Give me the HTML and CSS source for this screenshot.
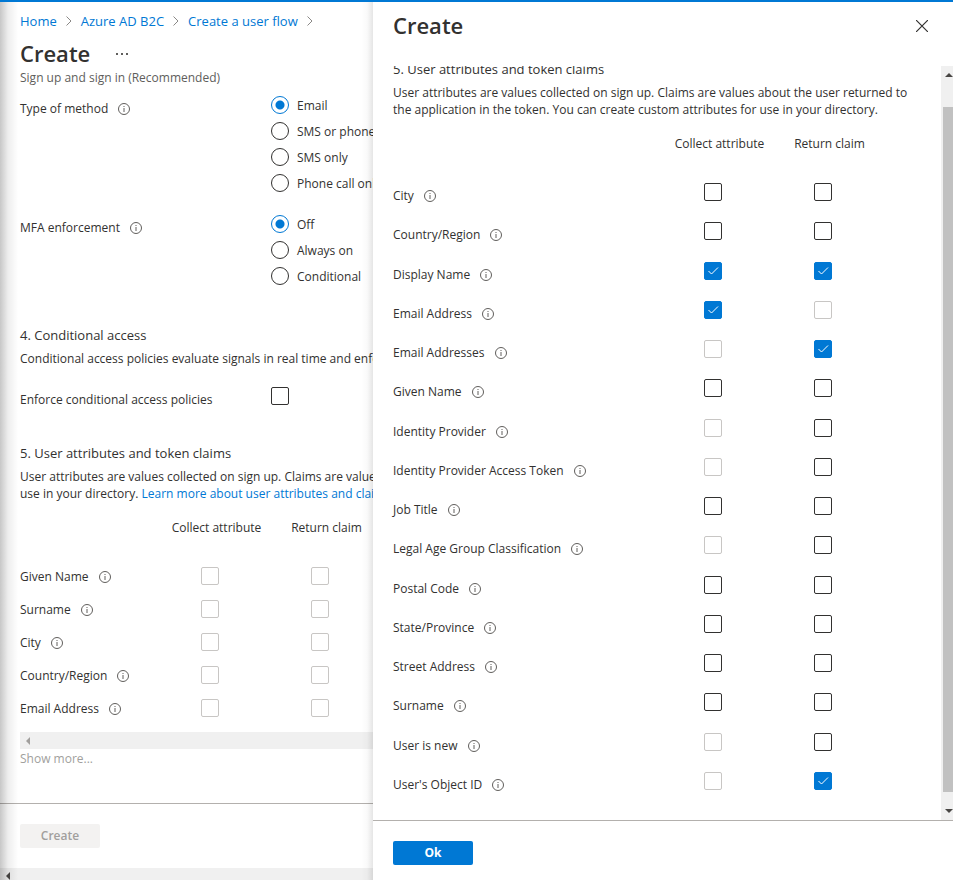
FILE: index.html
```html
<!DOCTYPE html>
<html lang="en">
<head>
<meta charset="utf-8">
<meta name="viewport" content="width=device-width, initial-scale=1">
<title>Create - Azure AD B2C</title>
<link rel="stylesheet" href="styles.css">
</head>
<body>
<svg class="sprite" aria-hidden="true">
  <symbol id="info" viewBox="0 0 12 12">
    <circle cx="6" cy="6" r="5.5" fill="none" stroke="#605e5c"/>
    <path d="M6 5v4M6 3v1" stroke="#605e5c" fill="none"/>
  </symbol>
  <symbol id="chevron" viewBox="0 0 6 10">
    <path d="M.5.5 5 5 .5 9.5" fill="none" stroke="#8a8886"/>
  </symbol>
</svg>
<div class="app">
  <main class="blade">
    <header class="blade-head">
      <nav class="crumbs" aria-label="Breadcrumb">
        <a href="#">Home</a><svg class="chev"><use href="#chevron"/></svg>
        <a href="#">Azure AD B2C</a><svg class="chev"><use href="#chevron"/></svg>
        <a href="#">Create a user flow</a><svg class="chev"><use href="#chevron"/></svg>
      </nav>
      <div class="title-row">
        <h1>Create</h1>
        <button class="more" type="button" aria-label="More"><svg viewBox="0 0 12 2"><path d="M0 0h2v2H0zM5 0h2v2H5zM10 0h2v2h-2z" fill="#605e5c"/></svg></button>
      </div>
      <p class="subtitle">Sign up and sign in (Recommended)</p>
    </header>

    <div class="blade-body">
      <div class="field" role="radiogroup" aria-labelledby="method">
        <div class="name" id="method">Type of method <svg class="info"><use href="#info"/></svg></div>
        <div class="options">
          <label><input type="radio" name="method" checked>Email</label>
          <label><input type="radio" name="method">SMS or phone</label>
          <label><input type="radio" name="method">SMS only</label>
          <label><input type="radio" name="method">Phone call only</label>
        </div>
      </div>
      <div class="field" role="radiogroup" aria-labelledby="mfa">
        <div class="name" id="mfa">MFA enforcement <svg class="info"><use href="#info"/></svg></div>
        <div class="options">
          <label><input type="radio" name="mfa" checked>Off</label>
          <label><input type="radio" name="mfa">Always on</label>
          <label><input type="radio" name="mfa">Conditional</label>
        </div>
      </div>

      <section class="conditional">
        <h2>4. Conditional access</h2>
        <p>Conditional access policies evaluate signals in real time and enforce</p>
        <div class="field">
          <label class="name" for="enforce">Enforce conditional access policies</label>
          <div class="options"><input type="checkbox" id="enforce"></div>
        </div>
      </section>

      <section class="attributes">
        <h2>5. User attributes and token claims</h2>
        <p>User attributes are values collected on sign up. Claims are values<br>use in your directory. <a href="#">Learn more about user attributes and claims</a></p>
        <table class="claims compact">
          <thead><tr><td></td><th scope="col">Collect attribute</th><th scope="col">Return claim</th></tr></thead>
          <tbody id="summary-rows"></tbody>
        </table>
        <div class="hscroll" aria-hidden="true"><svg viewBox="0 0 4 8"><path d="M4 0v8L0 4z"/></svg></div>
        <p class="show-more">Show more...</p>
      </section>
    </div>

    <footer class="blade-foot"><button class="btn" type="button" disabled>Create</button></footer>
    <div class="hscroll window" aria-hidden="true"><svg viewBox="0 0 4 8"><path d="M4 0v8L0 4z"/></svg></div>
  </main>

  <aside class="pane" aria-label="User attributes">
    <header class="pane-head">
      <h1>Create</h1>
      <button class="close" type="button" aria-label="Close"><svg viewBox="0 0 12 12"><path d="M0 0l12 12M12 0L0 12" fill="none" stroke="#323130" stroke-width="1.2"/></svg></button>
    </header>
    <div class="pane-view">
      <div class="pane-body">
        <h2>5. User attributes and token claims</h2>
        <p>User attributes are values collected on sign up. Claims are values about the user returned to the application in the token. You can create custom attributes for use in your directory.</p>
        <table class="claims">
          <thead><tr><td></td><th scope="col">Collect attribute</th><th scope="col">Return claim</th></tr></thead>
          <tbody id="attribute-rows"></tbody>
        </table>
      </div>
      <div class="vscroll" aria-hidden="true">
        <svg viewBox="0 0 8 4"><path d="M0 4h8L4 0z"/></svg>
        <div class="thumb"></div>
        <svg viewBox="0 0 8 4"><path d="M0 0h8L4 4z"/></svg>
      </div>
    </div>
    <footer class="pane-foot"><button class="btn primary" type="button">Ok</button></footer>
  </aside>
</div>
<script src="app.js"></script>
</body>
</html>
```
FILE: app.js
```js
// Each attribute: name, collect state, claim state.
// States: "on" checked, "off" unchecked, "na" not available.
const attributes = [
  ["City", "off", "off"],
  ["Country/Region", "off", "off"],
  ["Display Name", "on", "on"],
  ["Email Address", "on", "na"],
  ["Email Addresses", "na", "on"],
  ["Given Name", "off", "off"],
  ["Identity Provider", "na", "off"],
  ["Identity Provider Access Token", "na", "off"],
  ["Job Title", "off", "off"],
  ["Legal Age Group Classification", "na", "off"],
  ["Postal Code", "off", "off"],
  ["State/Province", "off", "off"],
  ["Street Address", "off", "off"],
  ["Surname", "off", "off"],
  ["User is new", "na", "off"],
  ["User's Object ID", "na", "on"]
];
const summary = ["Given Name", "Surname", "City", "Country/Region", "Email Address"]
  .map(name => [name, "na", "na"]);

function box(state, label) {
  const flags = { on: " checked", off: "", na: " disabled" }[state];
  return `<td><input type="checkbox" aria-label="${label}"${flags}></td>`;
}

function fill(id, rows) {
  document.getElementById(id).innerHTML = rows.map(([name, collect, claim]) =>
    `<tr><th scope="row">${name} <svg class="info"><use href="#info"/></svg></th>` +
    box(collect, `Collect ${name}`) + box(claim, `Return ${name}`) + "</tr>").join("");
}

fill("attribute-rows", attributes);
fill("summary-rows", summary);
```
FILE: styles.css
```css
* { box-sizing: border-box; }
body {
  margin: 0;
  background: #fff;
  color: #323130;
  font: 12px/17px "Open Sans", "Noto Sans", sans-serif;
}
h1, h2, p { margin: 0; }
h1 { padding-bottom: 2px; font-size: 22px; line-height: 30px; font-weight: 600; }
h2 { font-size: 13px; line-height: 18px; font-weight: 400; }
a { color: #0078d4; text-decoration: none; }
button { font: inherit; border: 0; padding: 0; background: none; }
svg { display: block; }
.sprite { position: absolute; width: 0; height: 0; }

.app {
  display: flex;
  min-height: 100vh;
  border-top: 2px solid #0078d4;
}

/* Blade behind the pane */
.blade {
  position: relative;
  flex: 1 1 0;
  min-width: 0;
  overflow: hidden;
  display: flex;
  flex-direction: column;
  white-space: nowrap;
}
.blade::after {
  content: "";
  position: absolute;
  inset: 0;
  pointer-events: none;
  background:
    linear-gradient(to right, rgba(0, 0, 0, .22), rgba(0, 0, 0, .07) 8px, transparent 18px),
    linear-gradient(to left, rgba(0, 0, 0, .1), rgba(0, 0, 0, .02) 6px, transparent 12px);
}
.blade-head { padding: 10px 20px 0; }
.crumbs { display: flex; align-items: center; gap: 9px; font-size: 13px; line-height: 18px; }
.chev { width: 6px; height: 10px; flex: none; }
.title-row { display: flex; align-items: center; gap: 26px; margin-top: 8px; }
.more svg { width: 12px; height: 2px; }
.subtitle { color: #605e5c; margin-top: -1px; }

.blade-body { flex: 1; padding: 8px 0 0 20px; }
.field { display: flex; margin-bottom: 21px; }
.name { flex: 0 0 251px; padding-top: 6px; }
.options { display: flex; flex-direction: column; gap: 8px; padding-top: 2px; }
.options label { display: flex; align-items: center; gap: 8px; height: 18px; }
.info { display: inline-block; width: 12px; height: 12px; margin-left: 7px; vertical-align: -2px; }

input { appearance: none; flex: none; display: block; width: 18px; height: 18px; margin: 0; border: 1px solid #323130; background: #fff; }
input[type="radio"] { border-radius: 50%; }
input[type="radio"]:checked { border-color: #0078d4; background: radial-gradient(circle, #0078d4 4px, #fff 5px); }
input[type="checkbox"] { border-radius: 2px; }
input[type="checkbox"]:disabled { border-color: #c8c6c4; }
input[type="checkbox"]:checked {
  border-color: #0078d4;
  background: #0078d4 url("data:image/svg+xml,%3Csvg xmlns='http://www.w3.org/2000/svg' viewBox='0 0 16 16'%3E%3Cpath d='M3.5 8l3 3L13 4.5' fill='none' stroke='white'/%3E%3C/svg%3E");
}

.conditional { padding-top: 20px; }
.conditional p, .attributes p, .pane-body p { margin-top: 6px; }
.conditional .field { margin: 18px 0 0; }
.attributes { margin-top: 36px; }

.claims { width: 100%; border-collapse: collapse; table-layout: fixed; }
.claims th { font-weight: 400; padding: 0; vertical-align: top; }
.claims td { padding: 0; vertical-align: top; width: 110px; }
.claims thead td { width: 265px; }
.claims thead th { width: 110px; height: 48px; padding-left: 13px; white-space: nowrap; }
.claims tbody th { text-align: left; padding-top: 4px; }
.claims tbody tr { height: 39px; }
.claims tbody tr:nth-child(4n + 2) { height: 40px; }
.claims input { margin: 0 auto; }
.pane .claims { width: 485px; margin-top: 17px; }
.compact { width: 355px; margin-top: 17px; }
.compact thead td { width: 135px; }
.compact tbody tr, .compact tbody tr:nth-child(4n + 2) { height: 33px; }
.compact tbody th { padding-top: 1px; }

.hscroll { display: flex; align-items: center; height: 17px; padding-left: 6px; background: #f0f0f0; }
.hscroll svg { width: 4px; height: 8px; fill: #a19f9d; }
.attributes .show-more { margin-top: 1px; color: #a19f9d; }
.blade-foot { border-top: 1px solid #b3b0ad; padding: 20px; }
.window { height: 12px; align-items: flex-end; }
.window svg { fill: #484644; }

.btn { display: block; width: 80px; height: 24px; padding-bottom: 2px; border-radius: 2px; font-weight: 600; }
.btn:disabled { background: #f3f2f1; color: #a19f9d; }
.btn.primary { background: #0078d4; color: #fff; font-weight: 700; }

/* Context pane */
.pane { flex: 0 0 580px; max-width: 100%; display: flex; flex-direction: column; background: #fff; }
.pane-head { display: flex; justify-content: space-between; align-items: center; height: 64px; padding: 0 25px 16px 20px; }
.close svg { width: 12px; height: 12px; }
.pane-view { flex: 1; display: flex; border-bottom: 1px solid #b3b0ad; overflow: hidden; }
.pane-body { flex: 1; min-width: 0; padding: 0 20px; margin-top: -6px; }
.vscroll { flex: 0 0 12px; display: flex; flex-direction: column; align-items: flex-end; background: #f0f0f0; padding: 7px 0 7px 2px; overflow: hidden; }
.vscroll svg { width: 8px; height: 4px; flex: none; fill: #484644; }
.thumb { flex: 1; align-self: stretch; margin: 30px 0 17px; background: #c1c1c1; }
.pane-foot { padding: 20px 20px 15px; }
```
